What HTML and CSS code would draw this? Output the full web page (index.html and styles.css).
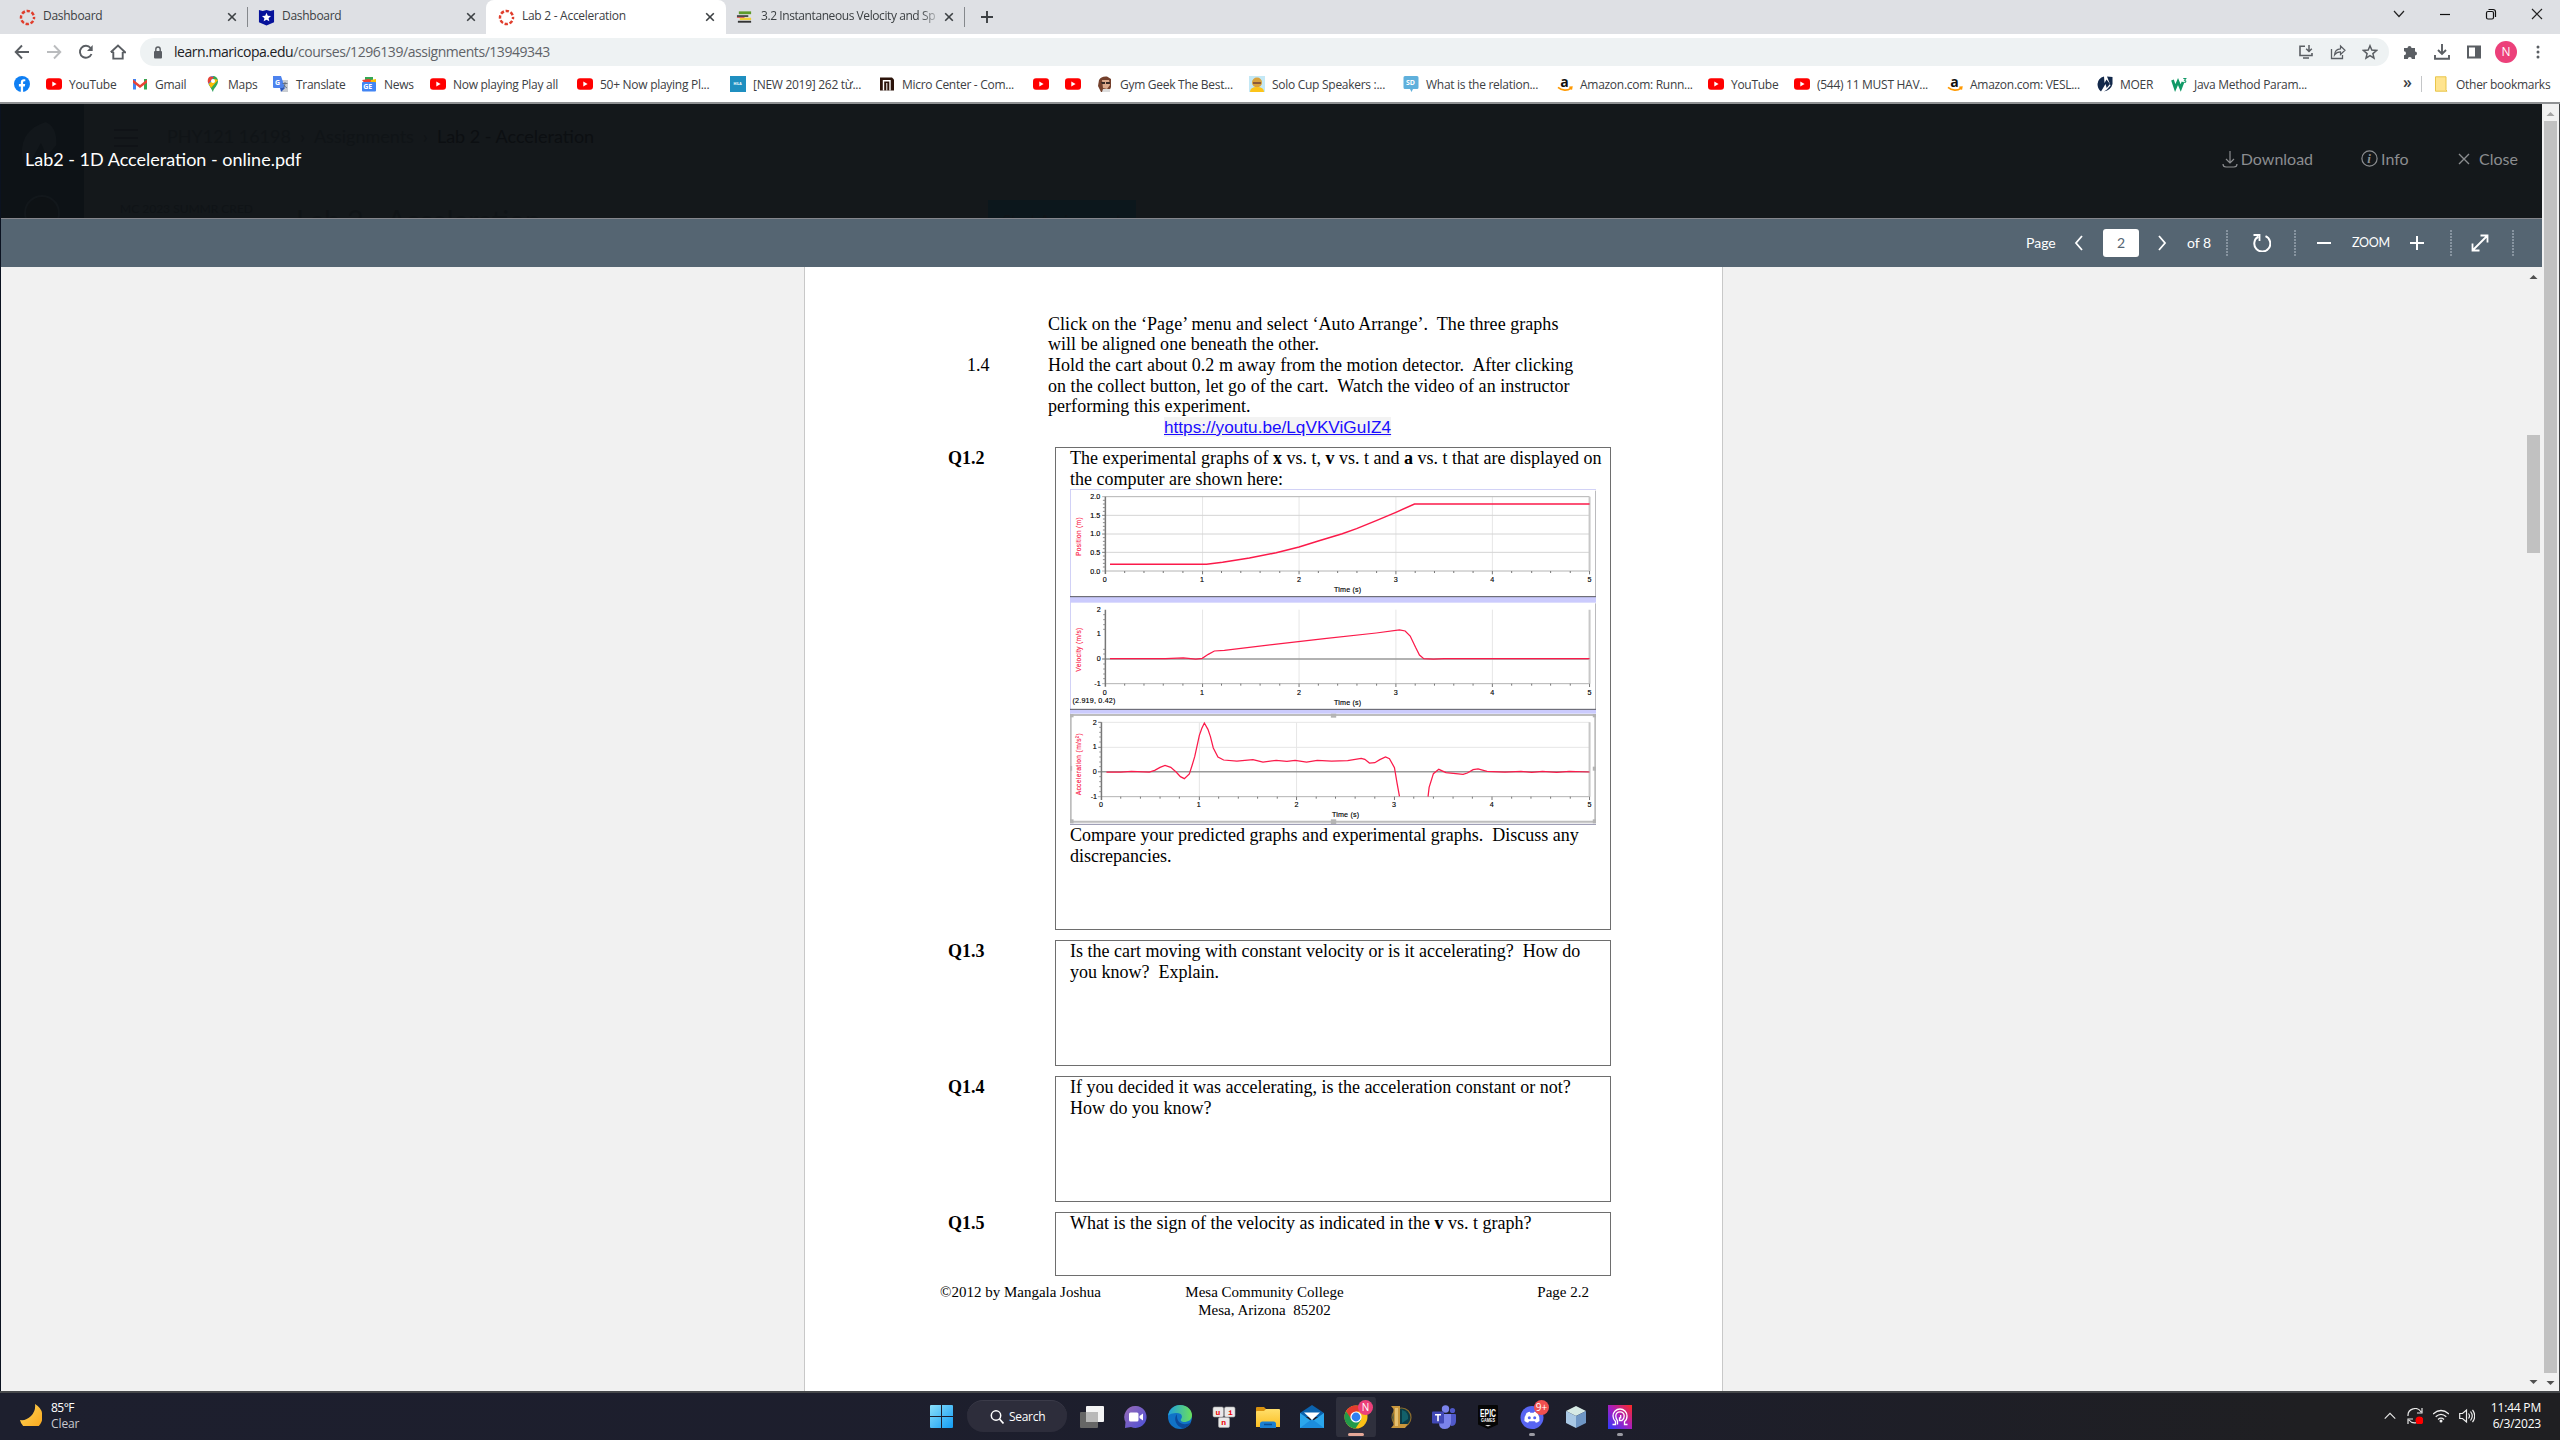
FILE: index.html
```html
<!DOCTYPE html>
<html lang="en">
<head>
<meta charset="utf-8">
<title>Lab 2 - Acceleration</title>
<link rel="stylesheet" href="styles.css">
</head>
<body>
<svg class="defs" width="0" height="0">
  <defs>
    <linearGradient id="gWin" x1="0" y1="0" x2="1" y2="1"><stop offset="0" stop-color="#8be0fb"/><stop offset="1" stop-color="#129cf3"/></linearGradient>
    <linearGradient id="gEdge" x1="0" y1="0" x2="1" y2="0"><stop offset="0" stop-color="#1f9fe0"/><stop offset="1" stop-color="#6be05a"/></linearGradient>
    <linearGradient id="gChat" x1="0" y1="0" x2="1" y2="1"><stop offset="0" stop-color="#9a6bb5"/><stop offset="1" stop-color="#4a50d8"/></linearGradient>
    <linearGradient id="gFold" x1="0" y1="0" x2="0" y2="1"><stop offset="0" stop-color="#ffdf6b"/><stop offset="1" stop-color="#fbbf24"/></linearGradient>
    <linearGradient id="gHot" x1="0" y1="1" x2="1" y2="0"><stop offset="0" stop-color="#2a3cff"/><stop offset=".5" stop-color="#a71fc0"/><stop offset="1" stop-color="#ff2a20"/></linearGradient>
    <linearGradient id="gMoon" x1="0" y1="0" x2="1" y2="1"><stop offset="0" stop-color="#ffd75a"/><stop offset="1" stop-color="#f9a51a"/></linearGradient>
    <symbol id="yt" viewBox="0 0 16 16"><rect x="0" y="2.2" width="16" height="11.6" rx="3" fill="#f00"/><path d="M6.3 5.4v5.2L10.6 8z" fill="#fff"/></symbol>
    <symbol id="canvas" viewBox="0 0 18 18"><circle cx="9" cy="9" r="6.9" fill="none" stroke="#e03e2d" stroke-width="2.6" stroke-dasharray="3.6 1.82" stroke-dashoffset="1.8"/></symbol>
    <symbol id="x" viewBox="0 0 10 10"><path d="M1.2 1.2l7.6 7.6M8.8 1.2L1.2 8.8" stroke="#3c4043" stroke-width="1.6" fill="none"/></symbol>
    <symbol id="amz" viewBox="0 0 16 16"><text x="3.2" y="10.6" class="amz-a">a</text><path d="M1 11.4c4 3.5 9.500 3.500 13 .7M12.300 11.300l2.500-.2-.5 2.600" stroke="#ff9900" stroke-width="1.600" fill="none"/></symbol>
  </defs>
</svg>

<header class="browser">
  <div class="tabs">
    <div class="tab t1"><svg class="i18"><use href="#canvas"/></svg><span>Dashboard</span><svg class="i10"><use href="#x"/></svg></div>
    <div class="tab t2"><svg class="i18" viewBox="0 0 18 18"><path d="M1 1l4 1 4-1 4 1 4-1v13l-8 3.500L1 14z" fill="#06129a"/><path d="M9 4l1.400 3.200 3.400.3-2.600 2.200.8 3.400L9 11.300l-3 1.800.8-3.400-2.600-2.200 3.400-.3z" fill="#fff"/></svg><span>Dashboard</span><svg class="i10"><use href="#x"/></svg></div>
    <div class="tab t3"><svg class="i18"><use href="#canvas"/></svg><span>Lab 2 - Acceleration</span><svg class="i10"><use href="#x"/></svg></div>
    <div class="tab t4"><svg class="i18" viewBox="0 0 18 18"><path d="M3 4h13" stroke="#5f9b2c" stroke-width="3"/><path d="M1 7.500h12" stroke="#4b4b4b" stroke-width="2"/><path d="M4 10.500h12" stroke="#f0cf3a" stroke-width="2.500"/><path d="M2 13.500h14" stroke="#333" stroke-width="2"/><path d="M1 9h8" stroke="#d85f5a" stroke-width="1"/></svg><span class="fade">3.2 Instantaneous Velocity and Sp</span><svg class="i10"><use href="#x"/></svg></div>
    <svg class="plus" viewBox="0 0 12 12"><path d="M6 0v12M0 6h12" stroke="#3c4043" stroke-width="1.900"/></svg>
    <div class="winctl">
      <svg viewBox="0 0 12 12"><path d="M1 3l5 5.500L11 3" fill="none" stroke="#222" stroke-width="1.200"/></svg>
      <svg viewBox="0 0 12 12"><path d="M1 6.500h10" stroke="#111" stroke-width="1.200"/></svg>
      <svg viewBox="0 0 12 12"><rect x="1.500" y="3.500" width="7" height="7.500" rx="1.500" fill="none" stroke="#111" stroke-width="1.200"/><path d="M3.500 1.500h4.500q2.500 0 2.500 2.500V9" fill="none" stroke="#111" stroke-width="1.200"/></svg>
      <svg viewBox="0 0 12 12"><path d="M1 1l10 10M11 1L1 11" stroke="#222" stroke-width="1.200"/></svg>
    </div>
  </div>

  <div class="nav">
    <svg class="nv" viewBox="0 0 16 16"><path d="M15 8H2M8 1.500L1.700 8 8 14.500" fill="none" stroke="#5a5e63" stroke-width="1.900"/></svg>
    <svg class="nv" viewBox="0 0 16 16"><path d="M1 8h13M8 1.500L14.300 8 8 14.500" fill="none" stroke="#babcbe" stroke-width="1.900"/></svg>
    <svg class="nv" viewBox="0 0 16 16"><path d="M13.500 10A6 6 0 1 1 12.600 4" fill="none" stroke="#5a5e63" stroke-width="1.900"/><path d="M14.700 1v6H9z" fill="#5a5e63"/></svg>
    <svg class="nv" viewBox="0 0 16 16"><path d="M3.300 8v6.600h9.400V8M.8 8.300L8 1.500l7.200 6.800H12.700" fill="none" stroke="#5a5e63" stroke-width="1.900"/><path d="M1 8.200h3" stroke="#5a5e63" stroke-width="1.500"/></svg>
    <div class="omni">
      <svg class="lock" viewBox="0 0 10 13"><rect x="1" y="5" width="8" height="7.500" rx="1" fill="#5a5e63"/><path d="M2.800 5.500V3.200a2.200 2.200 0 0 1 4.400 0v2.300" fill="none" stroke="#5a5e63" stroke-width="1.400"/></svg>
      <span class="url"><b>learn.maricopa.edu</b>/courses/1296139/assignments/13949343</span>
      <div class="omni-r">
        <svg viewBox="0 0 16 16"><path d="M7 2.200H2v9.300h12V9M5 14h6" fill="none" stroke="#5a5e63" stroke-width="1.600"/><path d="M11 1v6M8.200 4.800L11 7.500l2.800-2.700" fill="none" stroke="#5a5e63" stroke-width="1.500"/></svg>
        <svg viewBox="0 0 16 16"><path d="M1.500 5v9.500h11V11" fill="none" stroke="#5a5e63" stroke-width="1.300"/><path d="M4.500 11c.3-4 2.500-6 6-6.200V2l4.500 4.300-4.500 4.200V7.800C8 7.800 6 8.800 4.500 11z" fill="none" stroke="#5a5e63" stroke-width="1.200"/></svg>
        <svg viewBox="0 0 16 16"><path d="M8 1.800l1.800 4.300 4.700.4-3.600 3.100 1.100 4.600L8 11.700l-4 2.500 1.100-4.600L1.500 6.500l4.700-.4z" fill="none" stroke="#5a5e63" stroke-width="1.500"/></svg>
      </div>
    </div>
    <div class="ext">
      <svg viewBox="0 0 16 16"><path d="M2 4h3.500a2 2 0 1 1 4 0H13v3.500a2 2 0 1 1 0 4V15H9.800a2 2 0 0 0-4 0H2v-3.700a2 2 0 0 0 0-4z" fill="#5a5e63"/></svg>
      <svg viewBox="0 0 16 16"><path d="M8 0v9.500M4 6l4 4 4-4M1 11v3.800h14V11" fill="none" stroke="#5a5e63" stroke-width="1.900"/></svg>
      <svg viewBox="0 0 16 16"><path d="M1 1.500h14v13H1zM3 3.500v9h6v-9z" fill="#5a5e63" fill-rule="evenodd"/></svg>
      <span class="avatar">N</span>
      <svg viewBox="0 0 16 16"><circle cx="8" cy="3" r="1.500" fill="#5a5e63"/><circle cx="8" cy="8" r="1.500" fill="#5a5e63"/><circle cx="8" cy="13" r="1.500" fill="#5a5e63"/></svg>
    </div>
  </div>

  <div class="marks">
    <a style="width:32px"><svg viewBox="0 0 16 16"><circle cx="8" cy="8" r="8" fill="#0f7ff3"/><path d="M6.800 16v-5.500H4.900V8h1.900V6.400c0-2 1.200-3.100 3-3.100.9 0 1.500.1 1.500.1v1.900h-1c-.9 0-1.200.6-1.200 1.200V8h2.100l-.4 2.500H9.100V16z" fill="#fff"/></svg></a>
    <a style="width:86px"><svg><use href="#yt"/></svg>YouTube</a>
    <a style="width:73px"><svg viewBox="0 0 16 16"><path d="M1 3h3v10.500H1z" fill="#4285f4"/><path d="M12 3h3v10.500h-3z" fill="#34a853"/><path d="M1 3.500L8 9l7-5.500v3.300L8 12 1 6.800z" fill="#ea4335"/></svg>Gmail</a>
    <a style="width:68px"><svg viewBox="0 0 16 16"><path d="M8 16C7.500 12 3 10 3 5a5 5 0 0 1 5-5v5z" fill="#4285f4"/><path d="M8 0a5 5 0 0 1 5 5H8z" fill="#34a853"/><path d="M13 5c0 5-4.500 7-5 11L3.600 8 8 5z" fill="#34a853"/><path d="M3.500 7.500L9 1l-4-.5A5 5 0 0 0 3.500 7.500z" fill="#ea4335"/><path d="M3.600 8l6-5L13 4 6 12z" fill="#fbbc04"/><circle cx="8" cy="5" r="2" fill="#fff"/></svg>Maps</a>
    <a style="width:88px"><svg viewBox="0 0 16 16"><path d="M6 4h9v12H9z" fill="#c9ccd1"/><path d="M0 0h8l4 12H1q-1 0-1-1z" fill="#4d83ee"/><path d="M8 16l4-4H7z" fill="#2b55b8"/><text x="2" y="8.600" class="mini">G</text><path d="M9.500 7.500h5M12 6v1.500q0 3-2 4.500M11 9q1 2 3 3" stroke="#5f6a7a" stroke-width=".9" fill="none"/></svg>Translate</a>
    <a style="width:69px"><svg viewBox="0 0 16 16"><path d="M4 1h8v5H4z" fill="#34a853"/><path d="M1 4l7-1 6 3-9 3z" fill="#ea4335"/><path d="M10 4l5-1v5h-6z" fill="#fbbc04"/><rect x="1" y="6" width="14" height="9.500" rx="1" fill="#4285f4"/><text x="2.300" y="13.300" class="mini">GE</text></svg>News</a>
    <a style="width:147px"><svg><use href="#yt"/></svg>Now playing Play all</a>
    <a style="width:153px"><svg><use href="#yt"/></svg>50+ Now playing Pl...</a>
    <a style="width:149px"><svg viewBox="0 0 16 16"><rect width="16" height="16" fill="#1f8fc0"/><text x="3.500" y="8.500" class="nano">HILA</text></svg>[NEW 2019] 262 từ...</a>
    <a style="width:154px"><svg viewBox="0 0 16 16"><path d="M1 1.500h12l2 2v11H1z" fill="#2c140b"/><path d="M4.500 14.500V4.800h6.500v9.700" fill="none" stroke="#fff" stroke-width="1.400"/><path d="M7.800 7v7.500" stroke="#fff" stroke-width="1"/></svg>Micro Center - Com...</a>
    <a style="width:32px"><svg><use href="#yt"/></svg></a>
    <a style="width:32px"><svg><use href="#yt"/></svg></a>
    <a style="width:152px"><svg viewBox="0 0 16 16"><path d="M2 4q2-4 8-3.500L14 3v8l-2 5H4L1 10z" fill="#74402c"/><path d="M5 4h7l1 5-3 4-4-1z" fill="#dba98c"/><path d="M4 6h4v2H5zM9 6h4v2H9z" fill="#3a2a26"/><path d="M6 13h7v3H5z" fill="#ddd"/></svg>Gym Geek The Best...</a>
    <a style="width:154px"><svg viewBox="0 0 16 16"><rect width="16" height="16" fill="#c4e8f5"/><circle cx="8" cy="6.500" r="5" fill="#d9a23c"/><path d="M4 6h8v2H4z" fill="#8b5a3a"/><path d="M1 16q0-5 7-5t7 5z" fill="#fcc419"/></svg>Solo Cup Speakers :...</a>
    <a style="width:154px"><svg viewBox="0 0 16 16"><path d="M2 0h12q1.500 0 1.500 1.500v10q0 1.500-1.500 1.500h-4l-1.500 3L7 13H2Q.5 13 .5 11.500v-10Q.5 0 2 0z" fill="#5fb0dc"/><text x="3" y="9" class="mini">SD</text></svg>What is the relation...</a>
    <a style="width:151px"><svg><use href="#amz"/></svg>Amazon.com: Runn...</a>
    <a style="width:86px"><svg><use href="#yt"/></svg>YouTube</a>
    <a style="width:153px"><svg><use href="#yt"/></svg>(544) 11 MUST HAV...</a>
    <a style="width:150px"><svg><use href="#amz"/></svg>Amazon.com: VESL...</a>
    <a style="width:74px"><svg viewBox="0 0 16 16"><path d="M7 .5Q1 2 .5 8q0 5 3.500 7.500L8.500 8l1.200 4L13 8 9.500 3.500 7.500 7z" fill="#13294b"/><path d="M10 .5l5.500.5v7Q14 14 7 15.500l3-2 3.500-4z" fill="#13294b"/></svg>MOER</a>
    <a class="java"><svg viewBox="0 0 16 16"><path d="M1.500 4l2.700 8L7 5.500l2.700 6.500L12 6" fill="none" stroke="#119a67" stroke-width="2.800"/><path d="M12.300 2.500h2.500L13.500 4.300q2 .5 1 2h-2" fill="none" stroke="#119a67" stroke-width="1.100"/></svg>Java Method Param...</a>
    <span class="more">»</span>
    <a class="other"><svg viewBox="0 0 16 16"><path d="M2.500.8h10.500v13l1 1.400H2.500z" fill="#ffe48f" stroke="#e8c54a"/></svg>Other bookmarks</a>
  </div>
</header>

<main class="app">
  <div class="left">
    <section class="head">
      <div class="ghost">
        <div class="rail">
          <svg class="rail-logo" viewBox="0 0 40 48"><path d="M26 0Q0 8 1 34q2 10 6 13l14-25 6 14 10-12Q38 5 26 0z" fill="#12171b"/></svg>
          <svg class="rail-av" viewBox="0 0 36 36"><circle cx="18" cy="18" r="17" fill="#0e1215" stroke="#12171b" stroke-width="2"/></svg>
        </div>
        <div class="back">
          <div class="crumbs"><svg viewBox="0 0 24 18"><path d="M0 1h24M0 9h24M0 17h24" stroke="#101317" stroke-width="2"/></svg><span>PHY121 16198</span><i>›</i><span>Assignments</span><i>›</i><span class="cur">Lab 2 - Acceleration</span></div>
          <div class="under"><small>MC 2023 SUMMR CRED</small><strong>Lab 2 - Acceleration</strong><em>Start Assignment</em></div>
        </div>
      </div>
      <div class="bar">
        <h1>Lab2 - 1D Acceleration - online.pdf</h1>
        <div class="acts">
          <span class="dl"><svg viewBox="0 0 16 18"><path d="M8 1v12M4 9l4 4 4-4M1 14q0 3 3 3h8q3 0 3-3" fill="none" stroke="#8b8d90" stroke-width="1.200"/></svg>Download</span>
          <span class="inf"><svg viewBox="0 0 17 18"><circle cx="8.500" cy="8.500" r="7.600" fill="none" stroke="#8b8d90" stroke-width="1.200"/><text x="6.300" y="13" class="ital">i</text></svg>Info</span>
          <span class="cl"><svg viewBox="0 0 12 12"><path d="M1 1l10 10M11 1L1 11" stroke="#8b8d90" stroke-width="1.400"/></svg>Close</span>
        </div>
      </div>
    </section>

    <section class="tools">
      <span class="pg">Page</span>
      <svg class="lt" viewBox="0 0 10 16"><path d="M8 1L2 8l6 7" fill="none" stroke="#fff" stroke-width="1.800"/></svg>
      <span class="num">2</span>
      <svg class="gt" viewBox="0 0 10 16"><path d="M2 1l6 7-6 7" fill="none" stroke="#fff" stroke-width="1.800"/></svg>
      <span class="of">of 8</span>
      <i class="dots"></i>
      <svg class="rot" viewBox="0 0 18 18"><path d="M5.500 2.500A8 8 0 1 0 12.500 2.200" fill="none" stroke="#fff" stroke-width="2"/><path d="M.5 1h6v6" fill="none" stroke="#fff" stroke-width="1.800"/></svg>
      <i class="dots"></i>
      <svg class="mi" viewBox="0 0 14 14"><path d="M0 7h14" stroke="#fff" stroke-width="2"/></svg>
      <span class="zm">ZOOM</span>
      <svg class="pl" viewBox="0 0 14 14"><path d="M0 7h14M7 0v14" stroke="#fff" stroke-width="2"/></svg>
      <i class="dots"></i>
      <svg class="ex" viewBox="0 0 18 18"><path d="M2 16L16 2M9.500 1.500h7v7M1.500 9.500v7h7" fill="none" stroke="#fff" stroke-width="1.800"/></svg>
      <i class="dots"></i>
    </section>

    <section class="viewer">
      <article class="paper">
        <div class="step"><span></span><p>Click on the ‘Page’ menu and select ‘Auto Arrange’.&nbsp; The three graphs<br>will be aligned one beneath the other.</p></div>
        <div class="step"><span>1.4</span><p>Hold the cart about 0.2 m away from the motion detector.&nbsp; After clicking<br>on the collect button, let go of the cart.&nbsp; Watch the video of an instructor<br>performing this experiment.</p></div>
        <div class="link"><a>https://youtu.be/LqVKViGuIZ4</a></div>

        <div class="q q2"><b>Q1.2</b><div class="box">
          <p>The experimental graphs of <b>x</b> vs. t, <b>v</b> vs. t and <b>a</b> vs. t that are displayed on<br>the computer are shown here:</p>
          <svg class="chart" viewBox="28 57 1472 1008" preserveAspectRatio="none">
            <rect x="28" y="57" width="1472" height="1008" fill="#fff"/>
            <path d="M28 58H1500M29 58V735" stroke="#c9c9f5" class="w1"/>
            <path d="M1499 62V378M1499 400V717" stroke="#b0b0b4" class="w1"/>
            <rect x="28" y="381" width="1474" height="17" fill="#cbcbfd"/>
            <rect x="28" y="719" width="1474" height="12" fill="#cbcbfd"/>
            <path d="M28 380H1502M28 718H1502" stroke="#55555f" class="w1"/>
            <rect x="30" y="735" width="1468" height="320" fill="none" stroke="#bdbdbd" class="w2"/>
            <path d="M28 1063H1500" stroke="#8c8ca8" class="w1"/>
            <g fill="#b4b4b4"><rect x="758" y="731" width="15" height="12"/><rect x="758" y="1048" width="15" height="14"/><rect x="28" y="732" width="10" height="10"/><rect x="1491" y="732" width="10" height="10"/><rect x="1491" y="890" width="9" height="12"/><rect x="28" y="888" width="6" height="14"/><rect x="28" y="1048" width="10" height="12"/><rect x="1491" y="1048" width="10" height="12"/></g>

            <path d="M399 80V303M669 80V303M940 80V303M1210 80V303M399 419V641M669 419V641M940 419V641M1210 419V641M390 757V980M662 757V980M116 757H1482M116 832H1482" stroke="#e6e6e6" class="w1"/>
            <path d="M127 136H1482M127 192H1482M127 247H1482" stroke="#d4d4d4" class="w1"/>
            <path d="M118 80H1482M118 303H1482M118 641H1482M106 980H1482" stroke="#b4b4b4" class="w1"/>
            <path d="M118 567H1482M106 905H1482" stroke="#999" class="w15"/>
            <path d="M1482 80V303M1482 419V641M1482 757V980" stroke="#c8c8c8" class="w2"/>
            <path d="M127 80V312M127 419V650M116 757V990" stroke="#777" class="w15"/>
            <path d="M118 136h9M118 192h9M118 247h9M107 757h9M107 832h9" stroke="#777" class="w1"/>
            <path d="M120 91h7M120 102h7M120 113h7M120 124h7M120 147h7M120 158h7M120 169h7M120 180h7M120 203h7M120 214h7M120 225h7M120 236h7M120 258h7M120 269h7M120 280h7M120 291h7M121 434h6M121 449h6M121 464h6M121 478h6M121 538h6M121 552h6M121 582h6M121 597h6M121 612h6M121 626h6M110 772h6M110 787h6M110 801h6M110 816h6M110 846h6M110 861h6M110 876h6M110 890h6M110 920h6M110 935h6M110 950h6M110 965h6" stroke="#8a8a8a" class="w1"/>
            <path d="M181 303v6M235 303v6M289 303v6M344 303v6M399 303v10M452 303v6M506 303v6M560 303v6M615 303v6M669 303v10M723 303v6M777 303v6M831 303v6M886 303v6M940 303v10M994 303v6M1048 303v6M1102 303v6M1156 303v6M1210 303v10M1264 303v6M1320 303v6M1373 303v6M1428 303v6M1482 303v10M181 641v6M235 641v6M289 641v6M344 641v6M399 641v10M452 641v6M506 641v6M560 641v6M615 641v6M669 641v10M723 641v6M777 641v6M831 641v6M886 641v6M940 641v10M994 641v6M1048 641v6M1102 641v6M1156 641v6M1210 641v10M1264 641v6M1320 641v6M1373 641v6M1428 641v6M1482 641v10M170 980v6M225 980v6M280 980v6M334 980v6M390 980v10M444 980v6M499 980v6M553 980v6M608 980v6M662 980v10M717 980v6M771 980v6M826 980v6M881 980v6M936 980v10M990 980v6M1045 980v6M1100 980v6M1154 980v6M1209 980v10M1264 980v6M1318 980v6M1373 980v6M1428 980v6M1482 980v10" stroke="#777" class="w1"/>

            <g fill="none" stroke="#fb1a4a">
              <path class="w15" d="M140 283H335L410 283 455 277 530 264 605 248 669 231 725 212 790 191 830 176 885 152 940 127 992 102H1482"/>
              <path class="w12" d="M140 566H295L345 564 380 567 398 565 415 553 432 543 460 541 600 523 740 506 885 489 950 480 966 483 980 498 995 532 1006 555 1018 566 1045 567 1075 566 1482 566"/>
              <path class="w12" d="M130 906H170L200 904 250 906 265 901 280 892 294 886 310 892 325 906 337 920 348 926 362 912 370 885 377 860 390 796 397 775 404 759 414 778 421 800 429 834 442 861 458 870 495 873 540 869 568 876 605 871 635 874 658 871 690 876 720 871 760 873 805 872 843 865 853 868 866 879 881 878 895 869 911 861 922 866 936 893 943 938 950 979M1030 980L1033 952 1045 911 1060 898 1080 908 1128 913 1140 909 1156 899 1170 897 1195 904 1245 906 1290 904 1320 907 1350 904 1390 907 1425 904 1482 906"/>
            </g>
            <g class="lab">
              <text x="85" y="88">2.0</text><text x="85" y="144">1.5</text><text x="85" y="199">1.0</text><text x="85" y="255">0.5</text><text x="85" y="311">0.0</text>
              <text x="120" y="336">0</text><text x="392" y="336">1</text><text x="663" y="336">2</text><text x="934" y="336">3</text><text x="1204" y="336">4</text><text x="1476" y="336">5</text><text x="767" y="366" textLength="76">Time (s)</text>
              <text x="103" y="426">2</text><text x="103" y="499">1</text><text x="103" y="574">0</text><text x="96" y="648">-1</text>
              <text x="120" y="674">0</text><text x="392" y="674">1</text><text x="663" y="674">2</text><text x="934" y="674">3</text><text x="1204" y="674">4</text><text x="1476" y="674">5</text><text x="767" y="704" textLength="76">Time (s)</text>
              <text x="35" y="700" textLength="120">(2.919, 0.42)</text>
              <text x="92" y="764">2</text><text x="92" y="838">1</text><text x="92" y="912">0</text><text x="86" y="986">-1</text>
              <text x="109" y="1012">0</text><text x="383" y="1012">1</text><text x="656" y="1012">2</text><text x="929" y="1012">3</text><text x="1203" y="1012">4</text><text x="1476" y="1012">5</text><text x="761" y="1042" textLength="76">Time (s)</text>
            </g>
            <g class="lab red">
              <text transform="translate(59 258) rotate(-90)" textLength="116">Position (m)</text>
              <text transform="translate(59 605) rotate(-90)" textLength="132">Velocity (m/s)</text>
              <text transform="translate(58 976) rotate(-90)" textLength="186">Acceleration (m/s²)</text>
            </g>
          </svg>
          <p>Compare your predicted graphs and experimental graphs.&nbsp; Discuss any<br>discrepancies.</p>
        </div></div>
        <div class="q q3"><b>Q1.3</b><div class="box"><p>Is the cart moving with constant velocity or is it accelerating?&nbsp; How do<br>you know?&nbsp; Explain.</p></div></div>
        <div class="q q3"><b>Q1.4</b><div class="box"><p>If you decided it was accelerating, is the acceleration constant or not?<br>How do you know?</p></div></div>
        <div class="q q5"><b>Q1.5</b><div class="box"><p>What is the sign of the velocity as indicated in the <b>v</b> vs. t graph?</p></div></div>
        <footer class="pfoot"><span>©2012 by Mangala Joshua</span><span class="mid">Mesa Community College<br>Mesa, Arizona&nbsp; 85202</span><span class="rt">Page 2.2</span></footer>
      </article>
      <div class="sb inner"><svg viewBox="0 0 8 5"><path d="M0 5l4-4 4 4z" fill="#505050"/></svg><i></i><svg viewBox="0 0 8 5"><path d="M0 0l4 4 4-4z" fill="#505050"/></svg></div>
    </section>
  </div>
  <div class="sb outer"><svg viewBox="0 0 8 5"><path d="M0 5l4-4 4 4z" fill="#a3a3a3"/></svg><i></i><svg viewBox="0 0 8 5"><path d="M0 0l4 4 4-4z" fill="#505050"/></svg></div>
</main>

<footer class="task">
  <div class="wx"><svg viewBox="0 0 22 22"><path d="M15 0q8 5 7 12a10.500 10.500 0 0 1-22 4q6 1 11-4t4-12z" fill="url(#gMoon)"/></svg><p>85°F<br><span>Clear</span></p></div>
  <div class="dock">
    <svg class="start" viewBox="0 0 23 23"><path d="M0 1q0-1 1-1h10v11H0zM12 0h10q1 0 1 1v10H12zM0 12h11v11H1q-1 0-1-1zM12 12h11v10q0 1-1 1H12z" fill="url(#gWin)"/></svg>
    <div class="search"><svg viewBox="0 0 14 14"><circle cx="6" cy="5.500" r="4.700" fill="none" stroke="#fff" stroke-width="1.500"/><path d="M9.500 9l4 4.500" stroke="#fff" stroke-width="1.700"/></svg>Search</div>
    <div class="slot"><svg viewBox="0 0 24 24"><rect x="6" y="1" width="18" height="16" rx="1" fill="#f4f4f4"/><rect x="0" y="7" width="18" height="16" rx="1" fill="#666"/><rect x="6" y="7" width="12" height="10" fill="#b9b9b9"/></svg></div>
    <div class="slot"><svg viewBox="0 0 24 24"><path d="M12 1a11 11 0 1 1-5 21l-6 1 .5-6A11 11 0 0 1 12 1z" fill="url(#gChat)"/><rect x="5" y="7.500" width="9.500" height="9" rx="1.500" fill="#fff"/><path d="M15.500 11l3.500-2.500v7L15.500 13z" fill="#fff"/></svg></div>
    <div class="slot"><svg viewBox="0 0 24 24"><circle cx="12" cy="12" r="12" fill="#1173c7"/><path d="M0 11C1 4 6 0 12 0c8 0 12 6 12 10 0 5-4 7-8 7-2 0-4-1-3-3 2-2 1-6-4-6-4 0-8 1-9 3z" fill="url(#gEdge)"/><path d="M9 9c-4 5-1 12 6 14.500 4-1 7-3 8-6-7 4-15 1-14-8.500z" fill="#0b4a9c"/></svg></div>
    <div class="slot"><svg viewBox="0 0 24 24"><g fill="#e9e9e9" stroke="#aaa" stroke-width=".6"><rect x="1" y="2" width="10.500" height="10" rx="1.500"/><rect x="12.500" y="2" width="10.500" height="10" rx="1.500"/><rect x="6.500" y="12.500" width="11" height="10" rx="1.500"/></g><text x="3.500" y="9.500" class="uni">u</text><text x="16" y="9.500" class="uni">i</text><text x="9.300" y="19.500" class="uni">n</text></svg></div>
    <div class="slot"><svg viewBox="0 0 24 24"><path d="M0 3q0-1 1-1h7l3 3v5H0z" fill="#d9920f"/><path d="M0 7q0-1 1-1h7l2-2h13q1 0 1 1v17H0z" fill="url(#gFold)"/><path d="M4 23v-4q0-2.500 2.500-2.500h11q2.500 0 2.500 2.500v4z" fill="#1b7fd1"/><path d="M8 19.500h8" stroke="#0b4f94" stroke-width="1.500"/></svg></div>
    <div class="slot"><svg viewBox="0 0 24 24"><path d="M0 8l12-8 12 8v4H0z" fill="#0b62ad"/><path d="M0 8l12 8.500L24 8v15H0z" fill="#2ba6ec"/><path d="M0 23L12 14l12 9z" fill="#1c8ddd"/><path d="M4 7.500h16l-8 7.500z" fill="#fff"/></svg></div>
    <div class="slot on"><svg viewBox="0 0 24 24"><circle cx="12" cy="12" r="11.500" fill="#fbc116"/><path d="M2 6.200A11.500 11.500 0 0 1 22 6.500H12L7 15z" fill="#e33b2e"/><path d="M2 6.200A11.500 11.500 0 0 0 11.500 23.500L17 15l-9 0z" fill="#229a4a"/><circle cx="12" cy="12" r="5.600" fill="#fff"/><circle cx="12" cy="12" r="4.400" fill="#2f7ff0"/></svg><em class="bn">N</em><i class="run wide"></i></div>
    <div class="slot"><svg viewBox="0 0 24 24"><circle cx="13.500" cy="12.500" r="9.500" fill="#0b3b46" stroke="#8a6a2c" stroke-width="1.200"/><path d="M14 5q7 2 6 9l-6 4z" fill="#12606a"/><path d="M3 1h9v18h8l-3 4H3l2.500-3V4z" fill="#c9963c"/><path d="M7 3h3v18H7z" fill="#e6c071"/></svg></div>
    <div class="slot"><svg viewBox="0 0 24 24"><circle cx="20.500" cy="5.500" r="2.600" fill="#5059c9"/><circle cx="13.500" cy="4" r="3.700" fill="#7b83eb"/><path d="M15 9h8q1 0 1 1v6q0 5-5 5z" fill="#5059c9"/><path d="M7 9h12v8q0 7-6 7t-6-6z" fill="#7b83eb"/><rect y="6.500" width="12" height="12" rx="1" fill="#4148b5"/><path d="M3 9.700h6M6 9.700v6.500" stroke="#fff" stroke-width="1.600"/></svg></div>
    <div class="slot"><svg viewBox="0 0 24 24"><path d="M2 1q0-1 1-1h18q1 0 1 1v18.500L12 24 2 19.500z" fill="#060606"/><text x="4" y="11.500" class="epic" textLength="16" lengthAdjust="spacingAndGlyphs">EPIC</text><text x="5" y="17" class="games" textLength="14" lengthAdjust="spacingAndGlyphs">GAMES</text><path d="M9 20h6l-3 1.600z" fill="#ddd"/></svg></div>
    <div class="slot"><svg viewBox="0 0 24 24"><circle cx="12" cy="12.500" r="11.500" fill="#5865f2"/><path d="M6.500 8Q9 6.800 9.800 6.800l.5 1h3.400l.5-1q.8 0 3.300 1.200Q20 12 19.500 16q-2 1.600-3.600 1.800l-1-1.500h-5.800l-1 1.500Q6.500 17.600 4.500 16 4 12 6.500 8z" fill="#fff"/><circle cx="9.300" cy="12.700" r="1.500" fill="#5865f2"/><circle cx="14.700" cy="12.700" r="1.500" fill="#5865f2"/></svg><em class="b9">9+</em><i class="run"></i></div>
    <div class="slot"><svg viewBox="0 0 24 24"><path d="M12 1l10 5-10 5L2 6z" fill="#d6e9e4"/><path d="M2 6l10 5v12L2 18z" fill="#a9c8e4"/><path d="M22 6l-10 5v12l10-5z" fill="#6f96c4"/></svg></div>
    <div class="slot"><svg viewBox="0 0 24 24"><rect width="24" height="24" fill="url(#gHot)"/><path d="M4.500 19.500h3v-3Q5 14 5 11a7 7 0 0 1 14 0q0 4-2.500 5.500v3h3" fill="none" stroke="#fff" stroke-width="1.300"/><path d="M9.500 19.500v-3.700Q7.800 13.500 7.800 11a4.200 4.200 0 0 1 8.400 0q0 3-2.200 4.500h-2.500v-2.700h1.200V10" fill="none" stroke="#fff" stroke-width="1.300"/></svg><i class="run"></i></div>
  </div>
  <div class="tray">
    <svg viewBox="0 0 16 16"><path d="M2 11l6-6 6 6" fill="none" stroke="#e8e8e8" stroke-width="1.300"/></svg>
    <svg viewBox="0 0 16 16"><path d="M1 8A7 7 0 0 1 14 4M15 0v5h-5M14.500 9A7 7 0 0 1 2 12M1 16v-5h5" fill="none" stroke="#e8e8e8" stroke-width="1.200"/><circle cx="12.500" cy="12.500" r="4" fill="#f00"/></svg>
    <svg viewBox="0 0 16 16"><path d="M0 6Q8-1 16 6M2.700 8.800Q8 4 13.300 8.800M5 11.400q3-2.600 6 0" fill="none" stroke="#eee" stroke-width="1.300"/><circle cx="8" cy="13" r="1.500" fill="#eee"/></svg>
    <svg viewBox="0 0 16 16"><path d="M.7 5.500h2.800L7.500 2v12l-4-3.500H.7zM9.500 5.500q2 2.500 0 5M11.500 3.500q3.500 4.500 0 9M13.500 1.800q4.500 6.200 0 12.400" fill="none" stroke="#eee" stroke-width="1.200"/></svg>
    <p>11:44 PM<br>6/3/2023</p>
  </div>
</footer>
</body>
</html>
```
FILE: styles.css
```css
* { box-sizing: border-box; }
html, body { margin: 0; width: 2560px; height: 1440px; overflow: hidden; }
body { display: flex; flex-direction: column; background: #f1f1f1; font-family: "Open Sans", "Noto Sans", sans-serif; font-size: 12px; }
p, h1 { margin: 0; font-weight: normal; }
svg { display: block; flex: none; }
.defs { position: absolute; }

/* browser frame */
.browser { height: 104px; flex: none; background: #fff; border-bottom: 2px solid #8f9193; display: flex; flex-direction: column; color: #3c4043; }
.tabs { height: 34px; background: #dee0e4; display: flex; align-items: center; padding-left: 1px; }
.tab { height: 34px; display: flex; align-items: center; white-space: nowrap; letter-spacing: -.28px; }
.tab span { flex: 1; margin-left: 7px; line-height: 18px; padding-bottom: 2px; }
.i18 { width: 17px; height: 17px; }
.i10 { width: 10px; height: 10px; }
.t1 { width: 247px; padding: 0 11px 0 18px; background: linear-gradient(#85888c, #85888c) right center / 1px 20px no-repeat; }
.t2 { width: 238px; padding: 0 10px; }
.t3 { width: 240px; padding: 0 11px 0 12px; background: #fff; border-radius: 8px 8px 0 0; }
.t4 { width: 239px; padding: 0 11px 0 10px; background: linear-gradient(#85888c, #85888c) right center / 1px 20px no-repeat; }
.tab .fade { margin: 0 6px 0 8px; letter-spacing: -.42px; -webkit-mask-image: linear-gradient(90deg, #000 90%, rgba(0,0,0,.2)); mask-image: linear-gradient(90deg, #000 90%, rgba(0,0,0,.2)); }
.plus { width: 12px; height: 12px; margin-left: 16px; }
.winctl { margin: -6px 17px 0 auto; display: flex; gap: 34px; }
.winctl svg { width: 12px; height: 12px; }

.nav { height: 36px; display: flex; align-items: center; padding-left: 14px; }
.nv { width: 16px; height: 16px; margin-right: 16px; }
.omni { margin-left: -2px; width: 2249px; height: 28px; border-radius: 14px; background: #eef2f3; display: flex; align-items: center; padding: 0 11px 0 13px; }
.lock { width: 10px; height: 13px; }
.url { margin-left: 11px; font-size: 14px; letter-spacing: -.45px; color: #5f6368; white-space: nowrap; line-height: 20px; padding-bottom: 1px; }
.url b { font-weight: normal; color: #202124; }
.omni-r { margin-left: auto; display: flex; gap: 16px; }
.omni-r svg, .ext svg { width: 16px; height: 16px; }
.ext { display: flex; align-items: center; gap: 16px; margin-left: 13px; }
.avatar { width: 22px; height: 22px; margin: 0 -3px; border-radius: 50%; background: #ec407a; color: #fff; text-align: center; line-height: 22px; }

.marks { height: 32px; margin-top: -2px; display: flex; align-items: center; padding-left: 14px; }
.marks a { display: flex; align-items: center; gap: 7px; flex: none; white-space: nowrap; letter-spacing: -.28px; line-height: 15px; }
.marks a svg { width: 16px; height: 16px; }
.java { width: 232px; }
.more { width: 18px; font-size: 16px; font-weight: 600; line-height: 16px; margin-top: -4px; }
.marks .other { border-left: 1px solid #c4c6c8; padding-left: 11px; height: 16px; }
.amz-a { font: bold 14px "Open Sans", sans-serif; fill: #111; }
.mini { font: bold 7px "Open Sans", sans-serif; fill: #fff; letter-spacing: 0; }
.nano { font: bold 3.5px "Open Sans", sans-serif; fill: #fff; letter-spacing: 0; }

/* preview window */
.app { height: 1287px; flex: none; display: flex; border-left: 1px solid #0b1220; border-right: 1px solid #3f4143; }
.left { width: 2541px; display: flex; flex-direction: column; }
.head { height: 115px; background: #14181b; border-bottom: 1px solid #85868c; display: grid; font-family: Lato, sans-serif; overflow: hidden; }
.head > div { grid-area: 1 / 1; min-height: 0; }
.ghost { display: flex; color: #101417; }
.rail { width: 83px; background: #0d1216; padding: 18px 0 0 19px; }
.rail-logo { width: 40px; height: 46px; }
.rail-av { width: 36px; height: 36px; margin: 27px 0 0 4px; }
.back { padding: 18px 0 0 30px; }
.crumbs { display: flex; align-items: center; height: 28px; font-size: 18px; white-space: nowrap; }
.crumbs svg { width: 24px; height: 18px; margin: 4px 29px 0 0; }
.crumbs i { width: 23px; text-align: center; font-style: normal; }
.crumbs .cur { color: #0c0f12; }
.under { display: flex; margin-top: 50px; white-space: nowrap; }
.under small { font-size: 12px; width: 182px; padding-left: 6px; line-height: 18px; }
.under strong { font-size: 28px; font-weight: normal; width: 692px; line-height: 40px; }
.under em { font-style: normal; font-size: 16px; width: 148px; height: 40px; line-height: 40px; text-align: center; background: #0c171c; }
.bar { display: flex; justify-content: space-between; align-items: center; height: 109px; padding: 0 24px; }
.bar h1 { font-size: 18px; color: #fff; white-space: nowrap; }
.acts { display: flex; font-size: 16px; color: #8b8d90; }
.acts span { display: flex; align-items: center; gap: 3px; }
.acts .dl svg { width: 16px; height: 18px; }
.acts .inf { width: 97px; margin-left: 48px; }
.acts .inf svg { width: 17px; height: 18px; }
.acts .cl { gap: 9px; }
.acts .cl svg { width: 12px; height: 12px; }
.ital { font: italic bold 13px "Liberation Serif", serif; fill: #8b8d90; }

.tools { height: 48px; background: #556572; display: flex; align-items: center; padding: 0 0 1px 2025px; font-family: Lato, sans-serif; font-size: 14px; color: #fff; }
.tools span { white-space: nowrap; }
.pg { width: 48px; }
.lt, .gt { width: 10px; height: 16px; }
.num { width: 36px; height: 28px; margin: 0 18px 0 19px; background: #fff; border-radius: 3px; color: #556572; line-height: 28px; text-align: center; }
.of { width: 39px; margin-left: 20px; }
.dots { width: 2px; height: 26px; background: repeating-linear-gradient(#8794a0 0 2px, transparent 2px 3px); }
.rot { width: 18px; height: 18px; margin: 0 23px 0 25px; }
.mi, .pl { width: 14px; height: 14px; }
.mi { margin-left: 21px; }
.zm { font-size: 12.500px; width: 58px; margin-left: 21px; letter-spacing: -.3px; }
.pl { margin-right: 26px; }
.ex { width: 18px; height: 18px; margin: 0 23px 0 19px; }

.viewer { height: 1124px; background: #f1f1f1; display: flex; }
.paper { margin-left: 803px; width: 919px; height: 1124px; background: #fff; border: solid #c8c8c8; border-width: 0 1px; padding-top: 46.500px; font-family: "Liberation Serif", "Times New Roman", serif; font-size: 18px; line-height: 20.700px; color: #000; white-space: nowrap; }
.step { display: flex; padding-left: 162px; letter-spacing: .04px; }
.step span { width: 81px; }
.link { height: 31px; padding-left: 359px; font-family: "Liberation Sans", Arial, sans-serif; font-size: 17.200px; line-height: 20px; }
.link a { display: inline-block; background: #f3f3f3; color: #1a0dff; text-decoration: underline; }
.q { display: flex; padding-left: 143px; margin-bottom: 10px; }
.q > b { width: 107px; padding-top: 1px; }
.box { width: 556px; border: 1px solid #6e6e6e; padding: 0 0 0 14px; }
.q2 { height: 483px; margin-top: -1px; }
.q3 { height: 126px; }
.q5 { height: 64px; margin-bottom: 7px; }
.chart { width: 526px; height: 336px; }
.chart [class^="w"] { vector-effect: non-scaling-stroke; }
.w1 { stroke-width: 1px; }
.w12 { stroke-width: 1.250px; }
.w15 { stroke-width: 1.500px; }
.w2 { stroke-width: 2px; }
.lab { font: 20px "Liberation Sans", Arial, sans-serif; fill: #000; stroke: #000; stroke-width: .4px; }
.red { fill: #fb1a4a; stroke: #fb1a4a; }
.pfoot { display: grid; grid-template-columns: 200px 249px 200px; padding-left: 135px; font-size: 15px; line-height: 18px; }
.mid { text-align: center; }
.rt { text-align: right; }

.sb { display: flex; flex-direction: column; align-items: center; background: #f1f1f1; }
.sb svg { width: 9px; height: 5px; }
.sb i { width: 13px; background: #c1c1c1; }
.inner { width: 17px; margin-left: auto; padding-top: 7px; }
.inner i { height: 118px; margin: 156px 0 827px; }
.outer { width: 17px; padding-top: 7px; }
.outer i { height: 1252px; margin: 5px 0 8px; }

/* taskbar */
.task { flex: 1; border-top: 2px solid #46484b; background: linear-gradient(90deg, #1d1f2e 0, #1d1e2c 60%, #1f1f22 90%); display: flex; color: #fff; }
.task p { line-height: 16px; white-space: nowrap; }
.wx { display: flex; padding: 7px 0 0 20px; width: 930px; gap: 9px; font-weight: 600; letter-spacing: -.5px; }
.wx svg { width: 22px; height: 22px; margin-top: 4px; }
.wx span { font-weight: normal; color: #c9c9cf; letter-spacing: -.1px; }
.dock { display: flex; height: 47px; align-items: center; }
.start { width: 23px; height: 23px; }
.search { width: 100px; height: 32px; margin: -1px 3px 0 14px; border-radius: 16px; background: #2d2d3b; border-top: 1px solid #3b3b49; display: flex; align-items: center; gap: 5px; padding-left: 23px; letter-spacing: -.3px; }
.search svg { width: 14px; height: 14px; }
.slot { width: 44px; height: 40px; position: relative; display: flex; align-items: center; justify-content: center; }
.slot > svg { width: 24px; height: 24px; }
.on { background: #2f303d; background-clip: content-box; padding: 0 2px; border-radius: 4px; }
.slot em { position: absolute; left: 24px; top: 3px; width: 15px; height: 15px; border-radius: 50%; background: #ec407a; font: 10px/15px "Open Sans", sans-serif; text-align: center; }
.slot .b9 { background: #f0504f; }
.run { position: absolute; bottom: 1px; left: 19px; width: 6px; height: 3px; border-radius: 2px; background: #9a9aa2; }
.wide { left: 14px; width: 16px; background: #e5a898; }
.uni { font: bold 8px "Liberation Mono", monospace; fill: #e00; }
.epic { font: bold 11px "Liberation Sans", sans-serif; fill: #fff; }
.games { font: bold 4.500px "Liberation Sans", sans-serif; fill: #fff; }
.tray { display: flex; margin-left: auto; padding-right: 19px; gap: 10px; }
.tray svg { width: 16px; height: 16px; margin-top: 15px; }
.tray svg:nth-child(1) { width: 14px; }
.tray p { margin: 7px 0 0 6px; width: 50px; text-align: right; letter-spacing: -.2px; display: flex; justify-content: flex-end; }
```
